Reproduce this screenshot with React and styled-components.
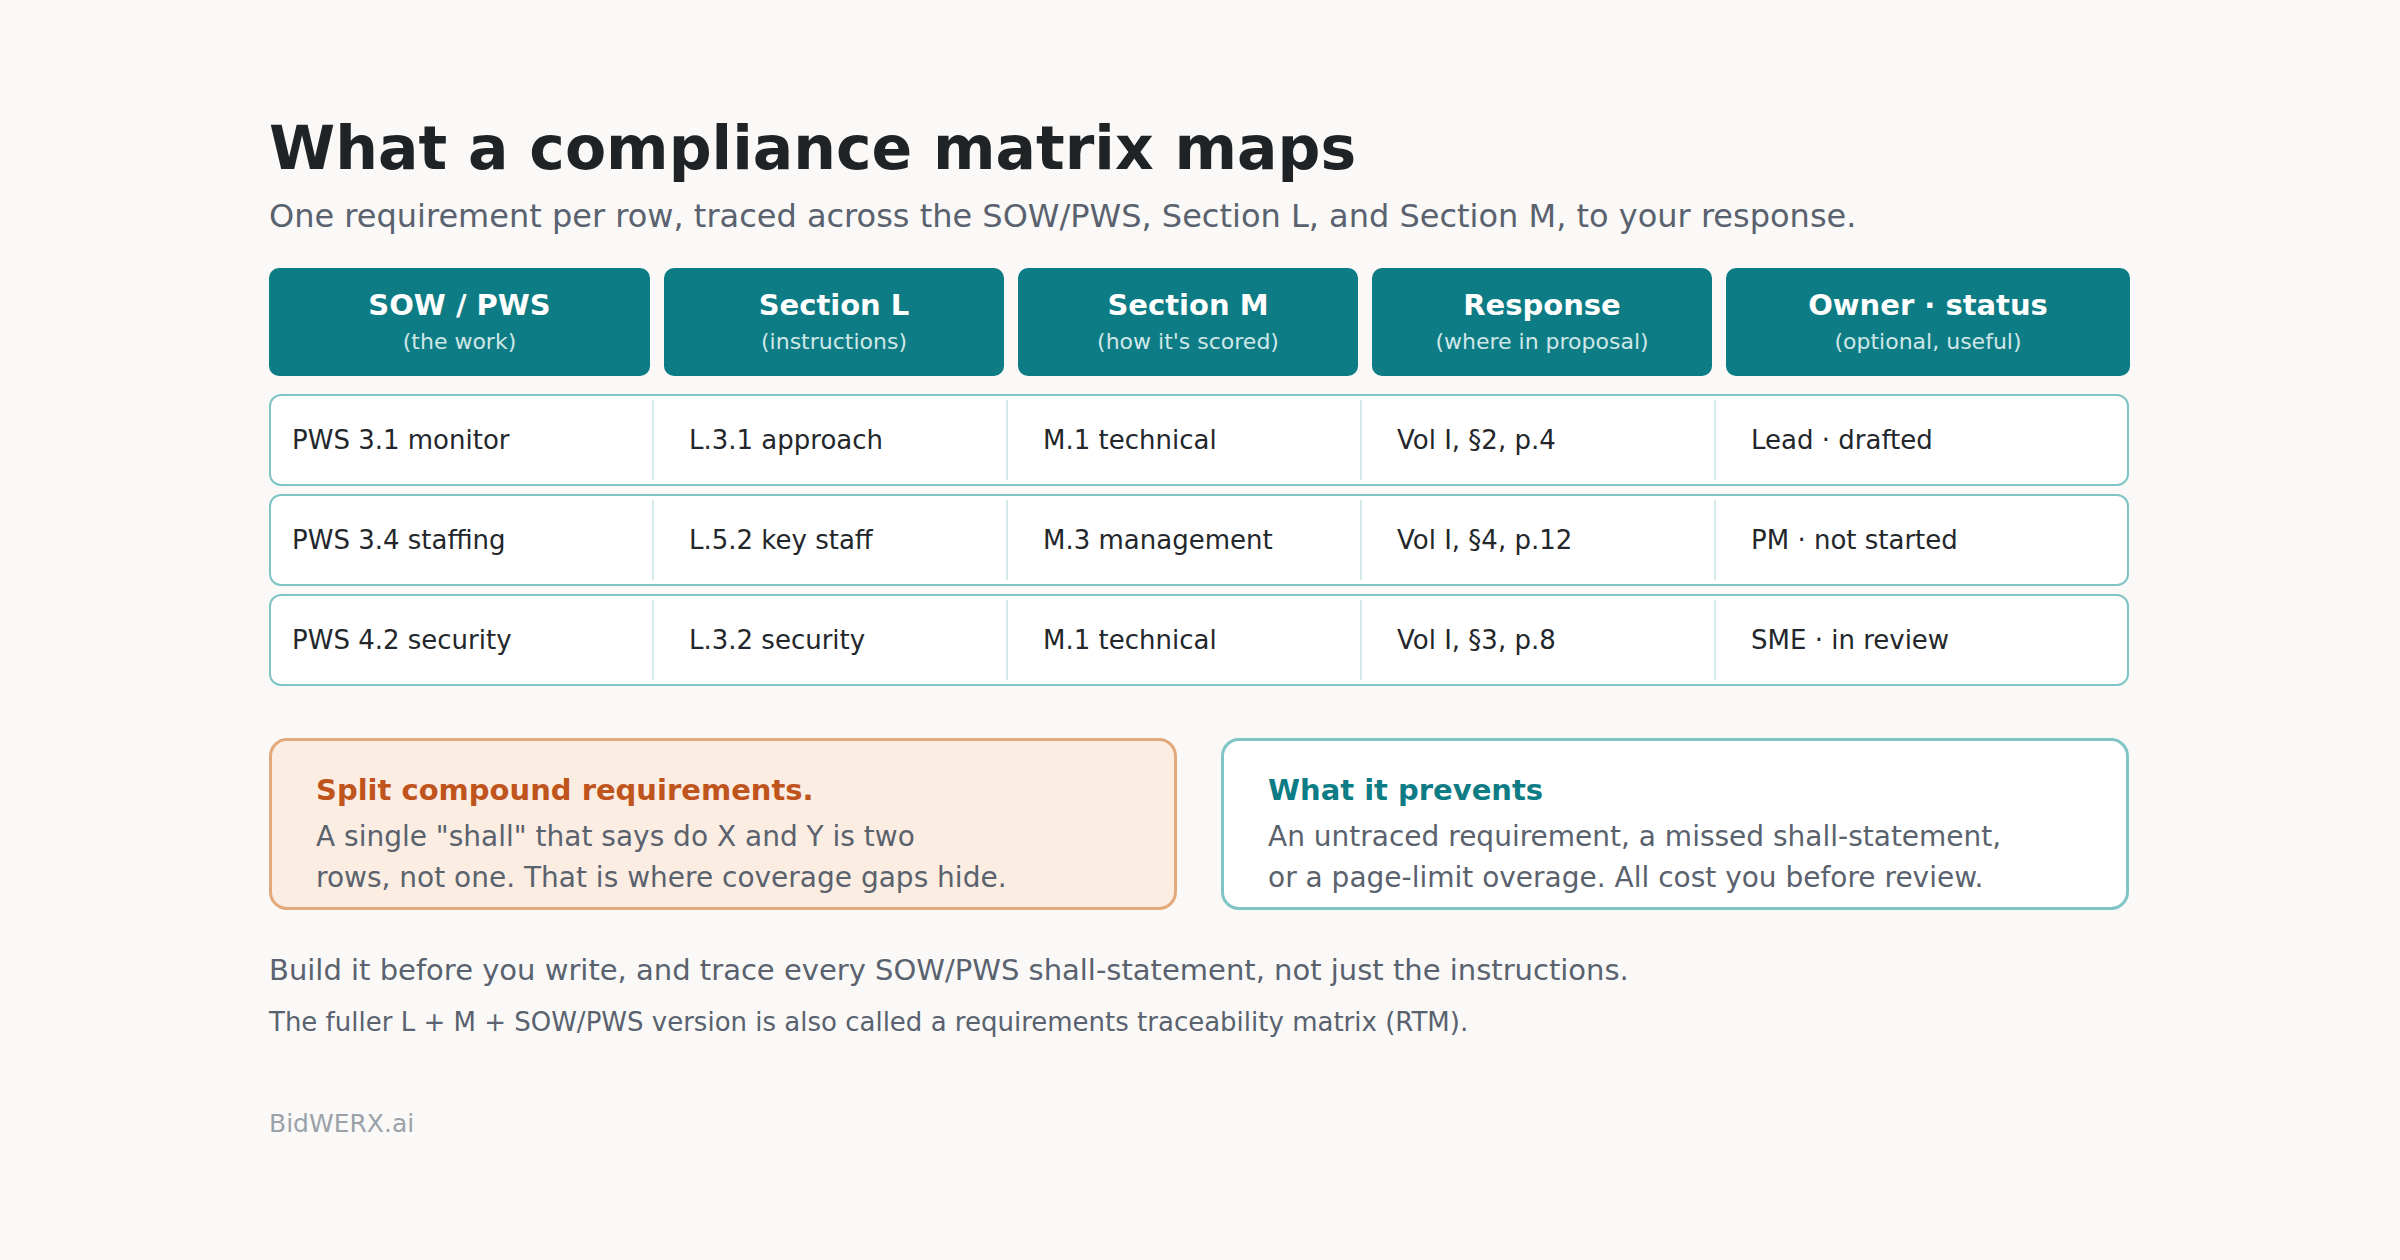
import React from "react";
import styled, { createGlobalStyle } from "styled-components";

const Global = createGlobalStyle`
  html, body { margin: 0; background: #faf9f7; }
  body { font-family: "DejaVu Sans", "Liberation Sans", sans-serif; }
`;

const Page = styled.div`
  width: 2400px; height: 1260px; box-sizing: border-box;
  padding: 112px 0 0 269px;
`;
const Wrap = styled.div`width: 1860px; display: flex; flex-direction: column;`;
const Title = styled.h1`
  margin: 0; font-size: 60px; font-weight: 700; color: #1f2326; line-height: 72px;
`;
const Sub = styled.p`
  margin: 12px 0 0; font-size: 32px; color: #59626e; line-height: 40px;
`;
const cols = "381px 354px 354px 354px 417px";
const HeadRow = styled.div`
  margin-top: 32px; display: grid; grid-template-columns: 381px 340px 340px 340px 404px; gap: 14px;
`;
const Head = styled.div`
  height: 108px; background: #0e7c84; border-radius: 10px; color: #fff;
  display: flex; flex-direction: column; align-items: center; justify-content: center;
`;
const HeadTitle = styled.div`font-size: 29px; font-weight: 700; line-height: 36px;`;
const HeadSub = styled.div`font-size: 22px; color: #cfe7e8; line-height: 30px; margin-top: 4px;`;
const Rows = styled.div`margin-top: 18px; display: flex; flex-direction: column; gap: 8px;`;
const Row = styled.div`
  height: 92px; box-sizing: border-box; border: 2.5px solid #80c5c6; border-radius: 12px;
  background: #fff; display: grid; grid-template-columns: ${cols};
`;
const Cell = styled.div`
  display: flex; align-items: center; font-size: 26px; color: #23272b;
  padding-left: ${p => (p.$first ? "21px" : "35px")};
  border-left: ${p => (p.$first ? "none" : "2px solid #d3e9ea")};
  margin: 4px 0;
`;
const Callouts = styled.div`
  margin-top: 52px; display: grid; grid-template-columns: 1fr 1fr; gap: 44px;
`;
const Callout = styled.div`
  height: 172px; box-sizing: border-box; border-radius: 18px;
  border: 3px solid ${p => (p.$warm ? "#e3a97b" : "#80c5c6")};
  background: ${p => (p.$warm ? "#fcede3" : "#fff")};
  padding: 30px 44px 0;
`;
const CTitle = styled.div`
  font-size: 29px; font-weight: 700; line-height: 38px;
  color: ${p => (p.$warm ? "#c0541d" : "#0e7c84")};
`;
const CBody = styled.div`
  margin-top: 7px; font-size: 28px; color: #5a626d; line-height: 41px;
`;
const Note = styled.p`
  margin: ${p => p.$mt}; font-size: ${p => p.$size}; color: #59626e; line-height: 40px;
`;
const Brand = styled.div`margin-top: 67px; font-size: 25px; color: #9ba1a8;`;

const heads = [
  ["SOW / PWS", "(the work)"],
  ["Section L", "(instructions)"],
  ["Section M", "(how it's scored)"],
  ["Response", "(where in proposal)"],
  ["Owner · status", "(optional, useful)"],
];
const data = [
  ["PWS 3.1 monitor", "L.3.1 approach", "M.1 technical", "Vol I, §2, p.4", "Lead · drafted"],
  ["PWS 3.4 staffing", "L.5.2 key staff", "M.3 management", "Vol I, §4, p.12", "PM · not started"],
  ["PWS 4.2 security", "L.3.2 security", "M.1 technical", "Vol I, §3, p.8", "SME · in review"],
];

export default function App() {
  return (
    <Page>
      <Global />
      <Wrap>
        <Title>What a compliance matrix maps</Title>
        <Sub>One requirement per row, traced across the SOW/PWS, Section L, and Section M, to your response.</Sub>
        <HeadRow>
          {heads.map(([t, s]) => (
            <Head key={t}><HeadTitle>{t}</HeadTitle><HeadSub>{s}</HeadSub></Head>
          ))}
        </HeadRow>
        <Rows>
          {data.map((r, i) => (
            <Row key={i}>
              {r.map((c, j) => <Cell key={j} $first={j === 0}>{c}</Cell>)}
            </Row>
          ))}
        </Rows>
        <Callouts>
          <Callout $warm>
            <CTitle $warm>Split compound requirements.</CTitle>
            <CBody>A single "shall" that says do X and Y is two<br />rows, not one. That is where coverage gaps hide.</CBody>
          </Callout>
          <Callout>
            <CTitle>What it prevents</CTitle>
            <CBody>An untraced requirement, a missed shall-statement,<br />or a page-limit overage. All cost you before review.</CBody>
          </Callout>
        </Callouts>
        <Note $mt="40px 0 0" $size="29px">Build it before you write, and trace every SOW/PWS shall-statement, not just the instructions.</Note>
        <Note $mt="12px 0 0" $size="26px">The fuller L + M + SOW/PWS version is also called a requirements traceability matrix (RTM).</Note>
        <Brand>BidWERX.ai</Brand>
      </Wrap>
    </Page>
  );
}
